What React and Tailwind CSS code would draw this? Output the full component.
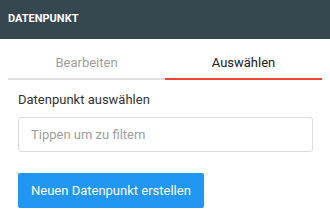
import React, { useState } from 'react';

export default function App() {
  const [tab, setTab] = useState('select');

  return (
    <div className="w-[330px] h-[210px] bg-white overflow-hidden" style={{ fontFamily: 'Roboto, "Liberation Sans", sans-serif' }}>
      <div className="h-[39px] bg-[#37474f] flex items-center px-2">
        <h1 className="text-[11px] font-bold text-white tracking-normal">DATENPUNKT</h1>
      </div>

      <div className="flex mx-2 mt-[9px]">
        <button
          onClick={() => setTab('edit')}
          className={`flex-1 h-[32px] text-[13px] border-b-2 ${tab === 'edit' ? 'text-[#212121] border-[#f44336]' : 'text-[#9e9e9e] border-[#e0e0e0]'}`}
        >
          Bearbeiten
        </button>
        <button
          onClick={() => setTab('select')}
          className={`flex-1 h-[32px] text-[13px] border-b-2 ${tab === 'select' ? 'text-[#212121] border-[#f44336]' : 'text-[#9e9e9e] border-[#e0e0e0]'}`}
        >
          Auswählen
        </button>
      </div>

      <div className="px-[18px] pt-[11px]">
        <label className="block text-[13px] text-[#333] leading-[18px]">Datenpunkt auswählen</label>
        <input
          type="text"
          placeholder="Tippen um zu filtern"
          className="mt-[8px] w-[295px] h-[35px] px-3 text-[13px] border border-[#dcdcdc] rounded-[3px] outline-none placeholder:text-[#9e9e9e]"
        />
        <button className="mt-[21px] h-[35px] px-[13px] bg-[#2196f3] text-white text-[13px] rounded-[2px]">
          Neuen Datenpunkt erstellen
        </button>
      </div>
    </div>
  );
}
